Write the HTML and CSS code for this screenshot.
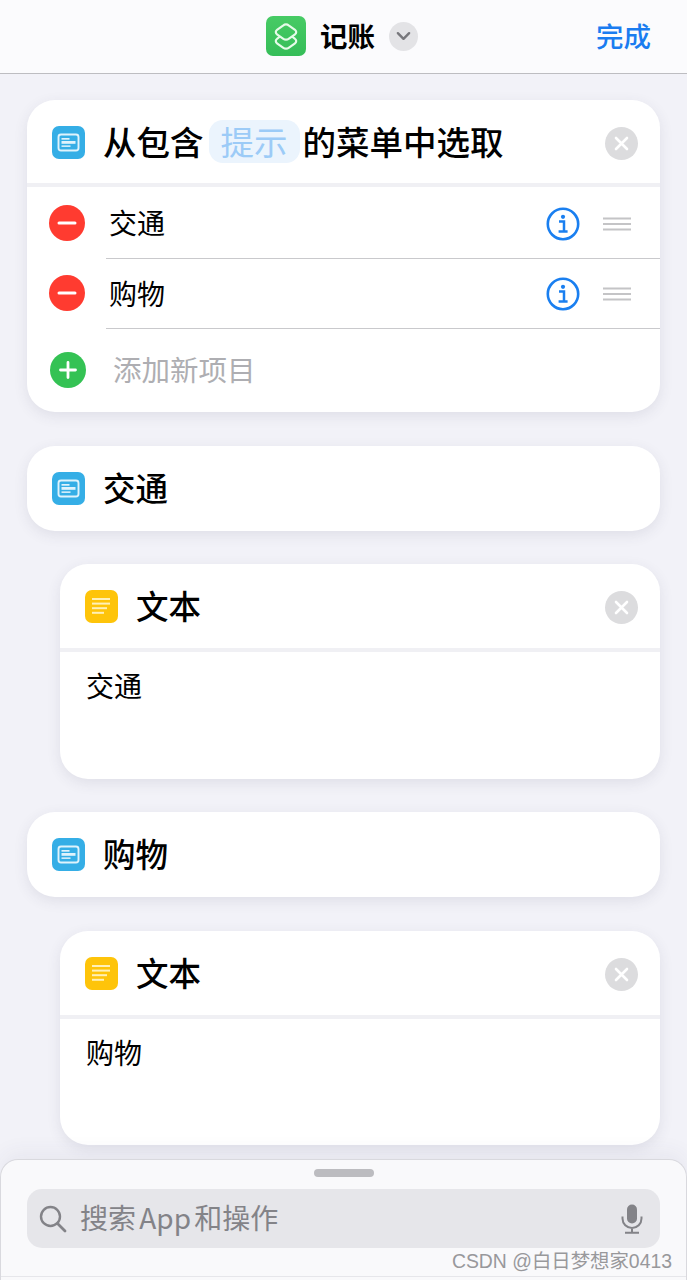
FILE: index.html
```html
<!DOCTYPE html>
<html lang="zh">
<head>
<meta charset="utf-8">
<title>记账</title>
<link rel="stylesheet" href="styles.css">
</head>
<body>
<svg class="defs" width="0" height="0" aria-hidden="true">
  <symbol id="menu-ico" viewBox="0 0 33 33">
    <rect width="33" height="33" rx="7" fill="#35aee6"/>
    <rect x="6.500" y="8.500" width="20" height="16" rx="2.500" fill="none" stroke="#dff3fc" stroke-width="1.900"/>
    <rect x="9.500" y="12" width="8" height="1.700" fill="#dff3fc"/>
    <rect x="9.500" y="15" width="14" height="2.800" fill="#dff3fc"/>
    <rect x="9.500" y="19.400" width="9" height="1.500" fill="#dff3fc"/>
  </symbol>
  <symbol id="text-ico" viewBox="0 0 33 33">
    <rect width="33" height="33" rx="7" fill="#fec40a"/>
    <g fill="#fff0b8">
      <rect x="7" y="8" width="18" height="2"/>
      <rect x="7" y="12.600" width="18" height="2"/>
      <rect x="7" y="17.200" width="15" height="2"/>
      <rect x="7" y="21.800" width="12" height="2"/>
    </g>
  </symbol>
  <symbol id="close-ico" viewBox="0 0 33 33">
    <circle cx="16.500" cy="16.500" r="16.500" fill="#dcdcde"/>
    <path d="M11 11l11 11M22 11L11 22" stroke="#fff" stroke-width="2.600" stroke-linecap="round"/>
  </symbol>
  <symbol id="minus-ico" viewBox="0 0 36 36">
    <circle cx="18" cy="18" r="18" fill="#ff3b30"/>
    <rect x="8.500" y="16.500" width="19" height="3" rx="1.500" fill="#fff"/>
  </symbol>
  <symbol id="info-ico" viewBox="0 0 34 34">
    <circle cx="17" cy="17" r="15.200" fill="none" stroke="#1a7ff0" stroke-width="2.600"/>
    <circle cx="17" cy="9.800" r="2.100" fill="#1a7ff0"/>
    <path d="M13 14.600h5v9.400M12.600 24.400h9" fill="none" stroke="#1a7ff0" stroke-width="2.500"/>
  </symbol>
  <symbol id="grip-ico" viewBox="0 0 28 14">
    <path d="M0 1.500h28M0 7h28M0 12.500h28" stroke="#c4c4c6" stroke-width="1.800"/>
  </symbol>
</svg>

<header class="topbar">
  <div class="title-group">
    <svg class="app-ico" viewBox="0 0 40 40">
      <defs><linearGradient id="g" x1="0" y1="0" x2="0" y2="1"><stop offset="0" stop-color="#47cb65"/><stop offset="1" stop-color="#35bd58"/></linearGradient></defs>
      <rect width="40" height="40" rx="7" fill="url(#g)"/>
      <path d="M14 20.500l-3 2.300a2.800 2.800 0 0 0 0 4.600l6 4.200a5 5 0 0 0 6 0l6-4.200a2.800 2.800 0 0 0 0-4.600l-3-2.300" fill="none" stroke="#e6fbe9" stroke-width="2.200"/>
      <path d="M17 9.600a5 5 0 0 1 6 0l6 4.200a2.800 2.800 0 0 1 0 4.600l-6 4.200a5 5 0 0 1-6 0l-6-4.200a2.800 2.800 0 0 1 0-4.600z" fill="none" stroke="#e6fbe9" stroke-width="2.200"/>
    </svg>
    <span class="app-name">记账</span>
    <span class="chevron-btn">
      <svg viewBox="0 0 16 10" width="15" height="10"><path d="M2 2l6 6 6-6" fill="none" stroke="#77777c" stroke-width="2.600" stroke-linecap="round" stroke-linejoin="round"/></svg>
    </span>
  </div>
  <span class="done">完成</span>
</header>

<main class="flow">
  <section class="card">
    <div class="card-head lead">
      <svg class="act-ico"><use href="#menu-ico"/></svg>
      <h2 class="card-title">从包含<span class="token">提示</span>的菜单中选取</h2>
      <svg class="close-ico"><use href="#close-ico"/></svg>
    </div>
    <div class="list">
      <div class="row">
        <svg class="minus"><use href="#minus-ico"/></svg>
        <span class="row-label">交通</span>
        <svg class="info"><use href="#info-ico"/></svg>
        <svg class="grip"><use href="#grip-ico"/></svg>
      </div>
      <div class="row">
        <svg class="minus"><use href="#minus-ico"/></svg>
        <span class="row-label">购物</span>
        <svg class="info"><use href="#info-ico"/></svg>
        <svg class="grip"><use href="#grip-ico"/></svg>
      </div>
      <div class="row-add">
        <svg class="plus" viewBox="0 0 36 36">
          <circle cx="18" cy="18" r="18" fill="#34c254"/>
          <path d="M18 10.500v15M10.500 18h15" stroke="#fff" stroke-width="2.800" stroke-linecap="round"/>
        </svg>
        <span class="add-label">添加新项目</span>
      </div>
    </div>
  </section>

  <section class="card spaced">
    <div class="card-head single">
      <svg class="act-ico"><use href="#menu-ico"/></svg>
      <h2 class="card-title">交通</h2>
    </div>
  </section>

  <section class="card nested">
    <div class="card-head">
      <svg class="act-ico"><use href="#text-ico"/></svg>
      <h2 class="card-title">文本</h2>
      <svg class="close-ico"><use href="#close-ico"/></svg>
    </div>
    <div class="text-body">交通</div>
  </section>

  <section class="card">
    <div class="card-head single">
      <svg class="act-ico"><use href="#menu-ico"/></svg>
      <h2 class="card-title">购物</h2>
    </div>
  </section>

  <section class="card nested spaced short">
    <div class="card-head">
      <svg class="act-ico"><use href="#text-ico"/></svg>
      <h2 class="card-title">文本</h2>
      <svg class="close-ico"><use href="#close-ico"/></svg>
    </div>
    <div class="text-body">购物</div>
  </section>
</main>

<aside class="sheet">
  <div class="handle"></div>
  <div class="search">
    <svg class="search-ico" viewBox="0 0 28 28"><circle cx="11.500" cy="11.500" r="9.500" fill="none" stroke="#838388" stroke-width="2.400"/><path d="M18.500 18.500l7.500 7.500" stroke="#838388" stroke-width="2.800" stroke-linecap="round"/></svg>
    <span class="search-text">搜索 App 和操作</span>
    <svg class="mic-ico" viewBox="0 0 22 30"><rect x="6" y="0.500" width="10" height="19" rx="5" fill="#838388"/><path d="M1.500 12.500v2a9.500 9.500 0 0 0 19 0v-2M11 24v4.500M4 28.800h14" fill="none" stroke="#838388" stroke-width="2"/></svg>
  </div>
  <div class="watermark">CSDN @白日梦想家0413</div>
</aside>
</body>
</html>
```

FILE: styles.css
```css
* { box-sizing: border-box; }
html, body { margin: 0; padding: 0; }
body {
  position: relative;
  width: 687px;
  height: 1280px;
  overflow: hidden;
  background: #f2f2f8;
  font-family: "Noto Sans CJK SC", "Noto Sans", sans-serif;
  color: #000;
}
.defs { position: absolute; }

.topbar {
  position: relative;
  height: 74px;
  background: #fbfbfd;
  border-bottom: 1px solid #bdbdc1;
  display: flex;
  align-items: center;
  padding: 0 36px 1px 266px;
  justify-content: space-between;
}
.title-group { display: flex; align-items: center; }
.app-ico { width: 40px; height: 40px; }
.app-name { margin: 0 0 2px 14px; font-size: 27.5px; font-weight: 700; line-height: 40px; }
.chevron-btn {
  margin-left: 14px;
  width: 29px;
  height: 29px;
  border-radius: 50%;
  background: #e3e3e6;
  display: flex;
  align-items: center;
  justify-content: center;
}
.done { margin-bottom: 2px; font-size: 27.5px; font-weight: 500; color: #1a7cf0; line-height: 40px; }

.flow {
  display: flex;
  flex-direction: column;
  gap: 33px;
  padding: 26px 27px 0;
}
.card {
  background: #fff;
  border-radius: 28px;
  box-shadow: 0 4px 14px rgba(60, 60, 90, 0.1);
}
.spaced { margin-top: 1px; }
.nested { margin-left: 33px; }
.card-head {
  height: 84px;
  display: flex;
  align-items: center;
  padding: 1px 22px 0 25px;
}
.card-head.lead { height: 83px; padding-top: 2px; }
.card-head.single { height: 85px; padding-top: 0; }
.act-ico { width: 33px; height: 33px; flex: none; }
.card-title {
  flex: 1;
  margin: 0 0 4px 18px;
  font-size: 32.5px;
  font-weight: 500;
  line-height: 44px;
  white-space: nowrap;
}
.lead .card-title { font-size: 33.5px; }
.token {
  display: inline-block;
  margin: 1px 3px 0 5px;
  padding: 0 12px;
  height: 43px;
  line-height: 41px;
  border-radius: 14px;
  background: #ebf4fd;
  color: #9ccbf7;
  font-weight: 400;
  vertical-align: top;
}
.close-ico { width: 33px; height: 33px; flex: none; margin-top: 2px; }

.list, .text-body { border-top: 4px solid #f0f0f4; }
.row {
  height: 72px;
  display: flex;
  align-items: center;
  padding-left: 22px;
  padding-right: 29px;
  position: relative;
}
.row::after {
  content: "";
  position: absolute;
  left: 79px;
  right: 0;
  bottom: 0;
  height: 1px;
  background: #c9c9cc;
}
.row + .row { height: 70px; padding-bottom: 2px; }
.row + .row .row-label { margin-bottom: 1px; }
.minus { width: 36px; height: 36px; flex: none; }
.row-label { flex: 1; margin: 0 0 3px 24px; font-size: 28px; line-height: 40px; }
.info { width: 34px; height: 34px; flex: none; margin-top: 2px; }
.grip { width: 28px; height: 14px; margin: 2px 0 0 23px; flex: none; }
.row-add {
  height: 83px;
  display: flex;
  align-items: center;
  padding: 0 0 1px 23px;
}
.plus { width: 36px; height: 36px; flex: none; }
.add-label { margin: 0 0 2px 27px; font-size: 28.5px; line-height: 40px; color: #aeaeb2; }

.text-body {
  height: 131px;
  padding: 13px 26px;
  font-size: 28px;
  line-height: 40px;
}
.short .text-body { height: 130px; }

.sheet {
  position: absolute;
  left: 0;
  right: 0;
  bottom: 0;
  height: 121px;
  background: #f9f9fb;
  border: 1px solid #d9d9de;
  border-bottom: 0;
  border-radius: 18px 18px 0 0;
  padding: 9px 26px 0;
  box-shadow: 0 -8px 20px rgba(60, 60, 90, 0.05);
}
.sheet::after {
  content: "";
  position: absolute;
  left: 0;
  right: 0;
  bottom: 3px;
  height: 1px;
  background: #e6e6ea;
}
.handle {
  width: 60px;
  height: 8px;
  border-radius: 4px;
  background: #bcbcc0;
  margin: 0 auto 12px;
}
.search {
  height: 59px;
  border-radius: 15px;
  background: #e6e6ea;
  display: flex;
  align-items: center;
  padding: 0 17px 0 12px;
}
.search-ico { width: 28px; height: 28px; flex: none; }
.search-text { flex: 1; margin: 0 0 3px 13px; font-size: 28px; line-height: 40px; color: #838388; word-spacing: -3px; white-space: nowrap; }
.mic-ico { width: 22px; height: 30px; flex: none; }
.watermark {
  position: absolute;
  right: 14px;
  bottom: 5px;
  font-family: "Liberation Sans", "Noto Sans CJK SC", sans-serif;
  font-size: 19.4px;
  line-height: 28px;
  color: #98989b;
  white-space: nowrap;
  z-index: 1;
}
```
